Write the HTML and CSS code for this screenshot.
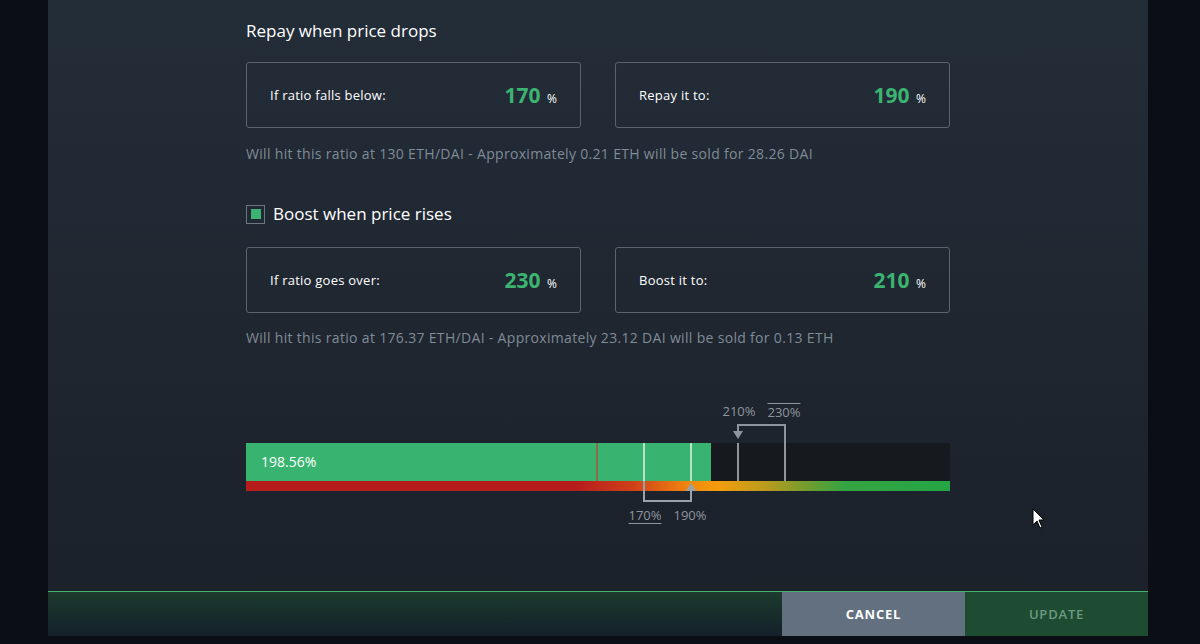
FILE: index.html
```html
<!DOCTYPE html>
<html lang="en">
<head>
  <meta charset="UTF-8">
  <title>Automation settings</title>
  <link rel="stylesheet" href="styles.css">
</head>
<body>
  <div class="modal">
    <div class="modal-body">
      <h3 class="section-title">Repay when price drops</h3>
      <div class="box-row">
        <div class="ratio-box">
          <span class="ratio-label">If ratio falls below:</span>
          <span class="ratio-value">170 <small>%</small></span>
        </div>
        <div class="ratio-box">
          <span class="ratio-label">Repay it to:</span>
          <span class="ratio-value">190 <small>%</small></span>
        </div>
      </div>
      <p class="hint">Will hit this ratio at 130 ETH/DAI - Approximately 0.21 ETH will be sold for 28.26 DAI</p>

      <label class="check-row">
        <span class="checkbox"><span class="checkbox-dot"></span></span>
        <span class="section-title">Boost when price rises</span>
      </label>
      <div class="box-row box-row-boost">
        <div class="ratio-box">
          <span class="ratio-label">If ratio goes over:</span>
          <span class="ratio-value">230 <small>%</small></span>
        </div>
        <div class="ratio-box">
          <span class="ratio-label">Boost it to:</span>
          <span class="ratio-value">210 <small>%</small></span>
        </div>
      </div>
      <p class="hint hint-boost">Will hit this ratio at 176.37 ETH/DAI - Approximately 23.12 DAI will be sold for 0.13 ETH</p>

      <div class="slider">
        <span class="mark-label top overline" style="left: 538px">230%</span>
        <span class="mark-label top" style="left: 493px">210%</span>
        <div class="bar">
          <div class="bar-fill" style="width: 465px">198.56%</div>
          <span class="tick tick-min" style="left: 350px"></span>
          <span class="tick tick-light" style="left: 397px"></span>
          <span class="tick tick-light" style="left: 444px"></span>
          <span class="tick tick-grey" style="left: 491px"></span>
          <span class="tick tick-grey" style="left: 538px"></span>
        </div>
        <div class="scale"></div>
        <svg class="brackets" width="704" height="130" viewBox="0 0 704 130">
          <path d="M539 43 V25 H492 V32" fill="none" stroke="#8e959c" stroke-width="2"/>
          <polygon points="487,31 497,31 492,39" fill="#8e959c"/>
          <path d="M398 81 V101 H445 V90" fill="none" stroke="#9aa1a8" stroke-width="2"/>
          <polygon points="440,91 450,91 445,83" fill="#9aa1a8"/>
        </svg>
        <span class="mark-label bottom underline" style="left: 399px">170%</span>
        <span class="mark-label bottom" style="left: 444px">190%</span>
      </div>
    </div>
    <div class="modal-footer">
      <div class="footer-space"></div>
      <button class="btn btn-cancel">CANCEL</button>
      <button class="btn btn-update">UPDATE</button>
    </div>
  </div>

  <svg class="cursor" width="14" height="22" viewBox="0 0 14 22">
    <path d="M1 1 V17 L5 13 L8 20 L10 19 L7 12 H12 Z" fill="#fff" stroke="#000" stroke-width="1"/>
  </svg>
</body>
</html>
```

FILE: styles.css
```css
* {
  box-sizing: border-box;
  margin: 0;
  padding: 0;
}

body {
  background-color: #0b0f15;
  font-family: "Open Sans", "Liberation Sans", sans-serif;
  color: #ffffff;
  height: 644px;
  overflow: hidden;
  position: relative;
}

.modal {
  width: 1100px;
  height: 636px;
  margin-left: 48px;
  display: flex;
  flex-direction: column;
  background: linear-gradient(#232d38, #1b2029);
}

.modal-body {
  flex: 1;
  padding-left: 198px;
  width: 902px;
}

.section-title {
  font-size: 17px;
  font-weight: 400;
  line-height: 22px;
  color: #ffffff;
}

.modal-body > .section-title {
  padding-top: 20px;
}

.box-row {
  display: flex;
  gap: 34px;
  margin-top: 20px;
}

.box-row-boost {
  margin-top: 23px;
}

.ratio-box {
  width: 335px;
  height: 66px;
  border: 1px solid #5b646e;
  border-radius: 3px;
  display: flex;
  align-items: center;
  justify-content: space-between;
  padding: 0 23px 0 23px;
}

.ratio-label {
  font-size: 13px;
  letter-spacing: 0.25px;
  color: #ffffff;
}

.ratio-value {
  font-size: 21px;
  font-weight: 700;
  color: #3cb371;
}

.ratio-value small {
  font-size: 12px;
  font-weight: 400;
  color: #ffffff;
  margin-left: 1px;
}

.hint {
  margin-top: 16px;
  font-size: 14px;
  line-height: 20px;
  letter-spacing: 0.32px;
  color: #808b97;
}

.hint-boost {
  margin-top: 15px;
}

.check-row {
  display: flex;
  align-items: center;
  gap: 8px;
  margin-top: 40px;
  height: 20px;
}

.checkbox {
  width: 19px;
  height: 19px;
  border: 1px solid #6c7680;
  display: flex;
  align-items: center;
  justify-content: center;
}

.checkbox-dot {
  width: 10px;
  height: 10px;
  background-color: #3cb371;
}

.slider {
  position: relative;
  width: 704px;
  height: 130px;
  margin-top: 52px;
  padding-top: 43px;
}

.bar {
  position: relative;
  height: 38px;
  background-color: #16191e;
}

.bar-fill {
  height: 100%;
  background-color: #38b470;
  font-size: 14px;
  line-height: 38px;
  padding-left: 15px;
  color: #ffffff;
}

.tick {
  position: absolute;
  top: 0;
  width: 2px;
  height: 38px;
}

.tick-min {
  background-color: #8a6b4c;
}

.tick-light {
  background-color: #b8e2c8;
}

.tick-grey {
  background-color: #8e959c;
}

.scale {
  height: 10px;
  background: linear-gradient(to right, #b71c1c 0%, #b71c1c 47%, #d0401a 55%, #f0880f 63%, #f59c0c 67%, #b89c1e 74%, #7a9c2c 79%, #35a442 85%, #24a545 100%);
}

.brackets {
  position: absolute;
  left: 0;
  top: 0;
}

.mark-label {
  position: absolute;
  transform: translateX(-50%);
  font-size: 13px;
  line-height: 16px;
  color: #8e959c;
}

.mark-label.top {
  top: 3px;
}

.mark-label.bottom {
  top: 107px;
}

.overline {
  border-top: 1px solid #8e959c;
}

.underline {
  border-bottom: 1px solid #8e959c;
}

.modal-footer {
  display: flex;
  height: 45px;
  border-top: 1px solid #45b070;
}

.footer-space {
  flex: 1;
  background: linear-gradient(#1c3b2e, #14202a);
}

.btn {
  width: 183px;
  border: none;
  font-family: inherit;
  font-size: 13px;
  letter-spacing: 0.8px;
}

.btn-cancel {
  background-color: #627080;
  color: #ffffff;
  font-weight: 700;
}

.btn-update {
  background-color: #1d4c33;
  color: #6f9a80;
  font-weight: 600;
}

.cursor {
  position: absolute;
  left: 1032px;
  top: 508px;
}
```
